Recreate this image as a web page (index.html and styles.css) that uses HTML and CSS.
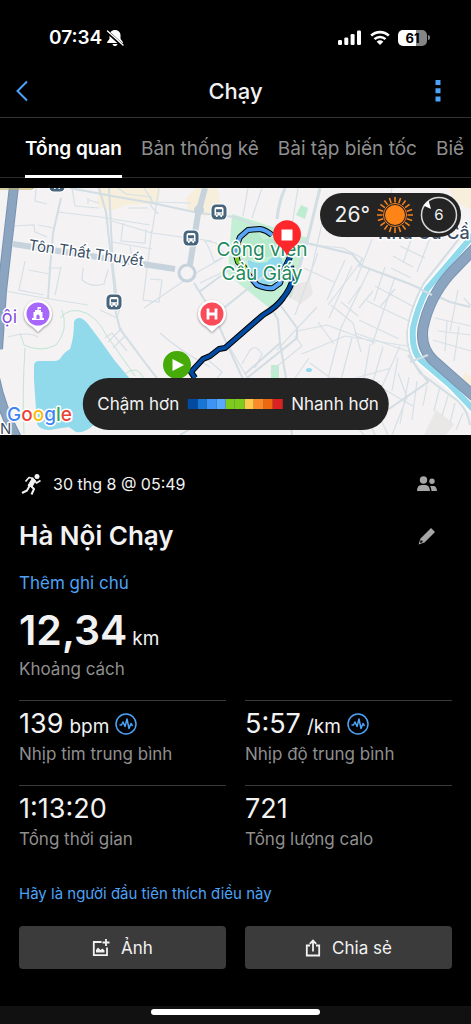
FILE: index.html
```
<!DOCTYPE html>
<html lang="vi">
<head>
    <meta charset="UTF-8">
    <meta name="viewport" content="width=device-width, initial-scale=1">
    <title>Chạy</title>
    <link rel="stylesheet" href="styles.css">
</head>
<body>

<div class="status">
    <div class="status-left">
        <span>07:34</span>
        <svg width="18" height="18" viewBox="0 0 18 18">
            <path d="M9 1c-3 0-5.500 2.200-5.500 5v3.500c0 1.300-2.500 2.500-2.500 4.500h16c0-2-2.500-3.200-2.500-4.500V6c0-2.800-2.500-5-5.500-5zM6.500 15h5c-.4 1.500-1.300 2-2.500 2s-2.100-.5-2.500-2z" fill="#fff"/>
            <path d="M1 2.500l15.500 14" stroke="#000" stroke-width="3.200"/>
            <path d="M1.500 2l15.500 14" stroke="#fff" stroke-width="1.400" stroke-linecap="round"/>
        </svg>
    </div>
    <div class="status-right">
        <svg width="24" height="16" viewBox="0 0 24 16" fill="#fff">
            <rect x="0" y="10" width="4" height="5" rx="1.200"/>
            <rect x="6.300" y="7.500" width="4" height="7.500" rx="1.200"/>
            <rect x="12.600" y="4" width="4" height="11" rx="1.200"/>
            <rect x="19" y="0.500" width="4" height="14.500" rx="1.200"/>
        </svg>
        <svg width="20" height="16" viewBox="0 0 20 16" fill="none" stroke="#fff" stroke-width="2.600">
            <path d="M1.200 5.700a12.500 12.500 0 0 1 17.600 0"/>
            <path d="M4.500 9.200a7.800 7.800 0 0 1 11 0"/>
            <path d="M10 15l-3.300-3.300a4.700 4.700 0 0 1 6.600 0z" fill="#fff" stroke="none"/>
        </svg>
        <div class="battery">61</div>
    </div>
</div>

<header class="header">
    <button class="icon-btn" aria-label="Quay lại">
        <svg width="14" height="22" viewBox="0 0 14 22" fill="none" stroke="#4da3f7" stroke-width="2"><path d="M12 1.500L2.500 11l9.500 9.500"/></svg>
    </button>
    <h1>Chạy</h1>
    <button class="icon-btn" aria-label="Thêm">
        <svg width="6" height="22" viewBox="0 0 6 22" fill="#4da3f7"><path d="M.5 0h5v5h-5zM.5 8.300h5v5h-5zM.5 16.500h5v5h-5z"/></svg>
    </button>
</header>

<nav class="tabs">
    <a class="active" href="#">Tổng quan</a>
    <a href="#">Bản thống kê</a>
    <a href="#">Bài tập biến tốc</a>
    <a class="last" href="#">Biểu</a>
</nav>

<div class="map">
    <svg class="map-canvas" viewBox="0 0 471 247" preserveAspectRatio="xMidYMid slice">
        <defs>
            <g id="bus">
                <rect x="-8.500" y="-8.500" width="17" height="17" rx="5" fill="#fff"/>
                <rect x="-7.500" y="-7.500" width="15" height="15" rx="4.500" fill="#46647c"/>
                <path d="M-4.500-3q0-2 2-2h5q2 0 2 2v6.500h-1.500v1.500h-1.600v-1.500h-2.800v1.500h-1.600v-1.500h-1.500z" fill="#fff"/>
                <path d="M-3-2.800h6v3h-6zM-3 1.500h1.500v1h-1.500zM1.500 1.500h1.500v1h-1.500z" fill="#46647c"/>
            </g>
            <path id="pin" d="M0 18l-5.500-5.200a14 14 0 1 1 11 0z"/>
        </defs>

        <rect width="471" height="247" fill="#f4f2f3"/>

        <!-- blocks -->
        <path d="M98 0h63l-3 15-32 2-16 6-12-5zM186 10l10-10h21l3 14-14 15-18-6z" fill="#f7eedb"/>
        <path d="M448 0h23v22l-14-8zM464 184l7 5v14l-9-9z" fill="#f7eedb"/>
        <path d="M296 96l14-3 3 13-12 10-9-5zM436 222l18 14-8 11h-22z" fill="#e9e8e7"/>
        <path d="M232 26l76 24-16 48-20 24-44-35z" fill="#c3efd5"/>
        <path d="M301 17l7 3-3 11-9-4zM271 177h8v13h-8z" fill="#bdedd1"/>
        <path d="M243 52q10-18 20 0 12-4 18 4l-8 12-26 4z" fill="#b4e8ca"/>

        <!-- water -->
        <path d="M74 134Q75 130 80 130Q84 131 88 136L100 152L115 173L131 192L125 225L95 236Q84 246 76 244L69 239Q60 240 50 242Q40 242 37 236L34 192V178Q34 173 39 173H54Q60 173 62 168Q66 163 70 161Q74 150 74 134Z" fill="#90daec"/>
        <path d="M247 71q8 6 20 3 8-9 15-3l2 10q-7 1-9 13-10 5-17 0-8-8-11-23z" fill="#90daec"/>
        <ellipse cx="309" cy="182" rx="3" ry="2" fill="#90daec"/>

        <!-- park paths -->
        <g fill="none" stroke="#bfe6d2">
            <path d="M25 160q-3 45-1 86M125 186q10-8 16 0l7 12"/>
            <path d="M62 122q7 20-6 35-15 8-32 0l-4-12M60 130q10-12 26-5 12 6 19 20l30 43"/>
        </g>

        <!-- small roads -->
        <g fill="none" stroke="#d6e0e6" stroke-width="1.200">
            <path d="M14 38l20-1 1 7 12 5M58 24l42 5 50 8M72 0l3 18 24 2M112 33l40 12 60 8M123 35l-2 18 24 2 1-14M112 54l40 7M152 42l-9 70 16 2 3-22-12-1M130 58l3 16M38 37l16 3M25 73l-6 29 25 5M48 80h12M28 82l22 4M83 80l-1 12q10 8 22 4l4-14M0 102l38 7 50 8M55 107l6-28"/>
            <path d="M88 10v6M99 15l-10-3M118 0l8 6 25 3v9l7 8M128 20h20M204 52q6 8 10 22l34-18M206 53l10 2 8 10M144 120l50-34 36-20M200 95l50-24M160 145q20 18 50 34M180 190l26-20 16 14-8 10"/>
            <path d="M8 149q20-6 30 0M105 150l7-5 15 18M108 154l14-14M113 160l12-12M100 122l17 8 3-10M144 0l9 14 38 1M159 0l-7 44M36 0l-1 13 12 3"/>
            <path d="M311 57l32 3 19 10-3 9M318 65l-23 62M370 80l-29 60-20 78M363 71l-35 46M338 8l-7 38M353 35l-5 15M372 51l-16 42M385 79l-11 34M395 89l-23 68M375 98l41 22M367 113l42 20M359 132l40 19M355 145l55 19"/>
            <path d="M302 166l43-18 62 10M297 143l30-6 48 18M310 175l19 14 51 5M331 117l22 18 8 29M318 134l16 22M341 114l17 14M352 150l-15 57M370 156l-9 53M383 159l-15 52M398 170l-6 33M320 198h55M303 205l88-25M309 170l-14 20M380 199l33 19M400 158l-20 45M348 116l13-18M359 120l14-17M380 119l15-18"/>
            <path d="M398 185l9 24-15 38M409 189l-9 47M417 193l-5 39M427 197l-4 21M374 216l14 31M362 218l13 29M346 226l18 21M352 240l36-20M435 130l36 8M438 143l33 4M447 133l-2 30M459 138l-5 35M433 152l38 11M458 102l-8 41M464 110l7 8M440 198l-6 25M448 208l-6 20M455 215l-5 20M463 225l-7 17"/>
            <path d="M392 0l-8 39M411 52l-8 23M430 50l-13 34M393 68l20 11M400 58l25 12M391 80l20 10M304 80l30 14M323 31l-14 62M298 0l-8 50M262 0l-10 30M248 0l-5 28M345 72l-18 40M352 78l-23 52"/>
            <path d="M277 162l40-43M270 184l32-26-7-10M242 176l8-14q6-6 12 4l-7 14M230 160l20 34M247 192h42"/>
        </g>

        <!-- larger roads -->
        <g fill="none" stroke="#d2dde4" stroke-width="3">
            <path d="M99 0l7 24 8 73 2 28 4 16 26 35 14 18M109 0l4 80 4 32M61 10l-8 35-3 36-2 30" stroke-width="2"/>
            <path d="M70 0l42 8 40 7 47 10 36 4 47 20 70 17 10 12 48 18 40 18 20 5" stroke-width="2"/>
            <path d="M277 31q2-18 8-31M308 50L320 0M308 50l-18 60"/>
            <path d="M194 95l20 32 27 60 12 22M215 127l55-44M270 117l8 15 2 23-35 31M281 118l16 22v10l-50 40M280 155l6 35 6 57" stroke-width="2"/>
            <path d="M199 104l45-33M180 247l40-24M370 234l58-40-20-27M462 47L424 95q-14 25-17 50 0 22 13 40l38 28q10 10 12 24" stroke-width="2"/>
        </g>
        <g fill="none" stroke="#c6d3dc" stroke-width="6">
            <path d="M13 56l162 25M205 0l-7 26-8 51"/>
        </g>
        <circle cx="187" cy="85" r="8" fill="#f4f2f3" stroke="#c6d3dc" stroke-width="3"/>
        <circle cx="199" cy="22" r="5" fill="#c6d3dc"/>

        <!-- river and expressways -->
        <path d="M475 45L427 101Q417 121 413 140Q411 165 423 174L450 197L475 223" fill="none" stroke="#fff" stroke-width="9"/>
        <path d="M475 45L427 101Q417 121 413 140Q411 165 423 174L450 197L475 223" fill="none" stroke="#90daec" stroke-width="6"/>
        <path d="M475 60L450 86Q429 110 423 140Q420 160 434 173L475 209" fill="none" stroke="#7892b2" stroke-width="11"/>
        <path d="M475 60L450 86Q429 110 423 140Q420 160 434 173L475 209" fill="none" stroke="#8ba5c1" stroke-width="9"/>
        <path d="M410 174l18-7M420 101l12 6" stroke="#d2dde4" stroke-width="2"/>
        <path d="M14-2L2 103l-4 58M-5 190q6 30 22 60" fill="none" stroke="#7892b2" stroke-width="10"/>
        <path d="M14-2L2 103l-4 58M-5 190q6 30 22 60" fill="none" stroke="#8ba5c1" stroke-width="8"/>
        <path d="M0 1h32l4-3" fill="none" stroke="#bba956"/>

        <use href="#bus" x="57" y="-4"/>
        <use href="#bus" x="219" y="24"/>
        <use href="#bus" x="191" y="50"/>
        <use href="#bus" x="114" y="114"/>

        <!-- route -->
        <g fill="none" stroke-linejoin="round">
            <path d="M195 190l-4-6 12-13 7-3 9-7 6-1 38-33q14-8 20-17 8-10 10-20l-2-12" stroke="#000" stroke-width="6"/>
            <path d="M290 69l-5 11-5 15-7 5q-7 1-16-3l-10-12-3-6-6-5-2-7 1-10 3-8 8-7 12-1q6 1 12 6" stroke="#000" stroke-width="6"/>
            <path d="M195 190l-4-6 12-13 7-3 9-7 6-1 38-33q14-8 20-17 8-10 10-20l-2-12" stroke="#034ba1" stroke-width="4"/>
            <path d="M290 69l-5 11-5 15-7 5q-7 1-16-3l-10-12-3-6-6-5-2-7 1-10 3-8 8-7 12-1q6 1 12 6" stroke="#58a5f7" stroke-width="4"/>
            <path d="M247 85l-3-6-6-5-2-7" stroke="#7ecb20" stroke-width="4"/>
            <path d="M290 69l-4 9" stroke="#034ba1" stroke-width="4"/>
        </g>

        <g class="map-text">
            <text class="street" x="28" y="62" transform="rotate(8 28 62)">Tôn Thất Thuyết</text>
            <text class="park" x="262" y="68" text-anchor="middle">Công viên</text>
            <text class="park" x="262" y="92" text-anchor="middle">Cầu Giấy</text>
            <text class="street place" x="378" y="51">Nhà Cũ Cầ</text>
            <text class="museum" x="17" y="135" text-anchor="end">ội</text>
            <text class="street" x="0" y="246">N</text>
            <text class="google" x="7" y="233"><tspan fill="#4285f4">G</tspan><tspan fill="#ea4335">o</tspan><tspan fill="#fbbc05">o</tspan><tspan fill="#4285f4">g</tspan><tspan fill="#34a853">l</tspan><tspan fill="#ea4335">e</tspan></text>
        </g>

        <!-- pins -->
        <g transform="translate(38 126)">
            <use href="#pin" fill="#fff" class="pin-shadow"/>
            <circle r="11.500" fill="#a667fa"/>
            <path d="M-6 4h12v2H-6zM-4.500-2h9v7h-9zM-3-4h6v2h-6zM-.5-7h3.500v1.800h-2.300V-3h-1.200z" fill="#fff"/>
            <path d="M-1.600 5V2.200a1.600 1.600 0 0 1 3.200 0V5z" fill="#a667fa"/>
        </g>
        <g transform="translate(212 126)">
            <use href="#pin" fill="#fff" class="pin-shadow"/>
            <circle r="11.500" fill="#f94b58"/>
            <path d="M-4-5.500v11M4-5.500v11M-4 0h8" stroke="#fff" stroke-width="2.800"/>
        </g>
        <g transform="translate(177 177)">
            <use href="#pin" fill="#46ab08"/>
            <path d="M-4.500-6l11.500 6-11.500 6z" fill="#fff"/>
        </g>
        <g transform="translate(287 48)">
            <path d="M0 20q-3-7-9-11a14 14 0 1 1 18 0q-6 4-9 11z" fill="#fe282c"/>
            <path d="M-5.500-6.500h11v11h-11z" fill="#fff"/>
        </g>
    </svg>

    <div class="weather">
        <span>26°</span>
        <svg width="38" height="38" viewBox="-19 -19 38 38">
            <g stroke="#f58220" stroke-width="1.600">
                <path id="ray" d="M0-12.500V-18M0 12.500V18"/>
                <use href="#ray" transform="rotate(18)"/>
                <use href="#ray" transform="rotate(36)"/>
                <use href="#ray" transform="rotate(54)"/>
                <use href="#ray" transform="rotate(72)"/>
                <use href="#ray" transform="rotate(90)"/>
                <use href="#ray" transform="rotate(108)"/>
                <use href="#ray" transform="rotate(126)"/>
                <use href="#ray" transform="rotate(144)"/>
                <use href="#ray" transform="rotate(162)"/>
            </g>
            <circle r="11.500" fill="none" stroke="#f58220" stroke-width="1"/>
            <circle r="10" fill="#ff8418"/>
        </svg>
        <div class="wind">
            <svg width="38" height="38" viewBox="-19 -19 38 38">
                <circle r="17.500" fill="none" stroke="#d8d8d8" stroke-width="1.500"/>
                <path d="M-8-6l-7.500-3.500 5-5z" fill="#fff"/>
            </svg>
            <span>6</span>
        </div>
    </div>

    <div class="legend">
        <span>Chậm hơn</span>
        <div class="scale">
            <i class="c1"></i><i class="c2"></i><i class="c3"></i><i class="c4"></i><i class="c5"></i>
            <i class="c5"></i><i class="c6"></i><i class="c7"></i><i class="c8"></i><i class="c9"></i>
        </div>
        <span>Nhanh hơn</span>
    </div>
</div>

<main class="content">
    <div class="row meta">
        <svg width="24" height="24" viewBox="0 0 24 24" fill="none" stroke="#f2f2f2" stroke-linejoin="round">
            <circle cx="18" cy="4.500" r="2.500" fill="#f2f2f2" stroke="none"/>
            <path d="M13.500 6L9 13.500l4 1.500 3.500-6.500z" fill="#f2f2f2" stroke="#f2f2f2"/>
            <path d="M14.500 6.500L10 5.500 6.500 9.500M15.500 8.500l2 2.500 4-2.500" stroke-width="1.600"/>
            <path d="M10.500 14L8 18.500l-5 2.500M11.500 13.500l3.500 3.500-2.500 5.500" stroke-width="2"/>
        </svg>
        <span class="date">30 thg 8 @ 05:49</span>
        <button class="icon-btn" aria-label="Quyền riêng tư">
            <svg width="20" height="16" viewBox="0 0 20 16" fill="#a6a6a6">
                <circle cx="6.500" cy="4" r="3.700"/>
                <circle cx="15" cy="5.300" r="2.700"/>
                <path d="M0 15q0-6 4.500-6h4q4 0 4.500 6zM13 10h3.500q3 0 3.500 5h-5.500q0-3-1.500-5z"/>
            </svg>
        </button>
    </div>

    <div class="row title">
        <h2>Hà Nội Chạy</h2>
        <button class="icon-btn" aria-label="Sửa">
            <svg width="18" height="18" viewBox="0 0 18 18" fill="#a6a6a6">
                <path d="M13 1l4 4L6.500 15.500l-6 2L2.500 11.500zM2.500 13.500L2 16l2.500-.8v-1.700z" fill-rule="evenodd"/>
            </svg>
        </button>
    </div>

    <a class="note" href="#">Thêm ghi chú</a>

    <div class="distance">
        <div><b>12,34</b> <span class="unit">km</span></div>
        <p>Khoảng cách</p>
    </div>

    <div class="stats">
        <div class="stat">
            <div class="value">139 <span class="unit">bpm</span>
                <svg width="22" height="22" viewBox="0 0 22 22" fill="none" stroke="#4da3f7" stroke-width="1.500"><circle cx="11" cy="11" r="10"/><path d="M4.500 12h2L8 9l2 4.500L12 6l2 9.500 2-5 1.500 2.500" stroke-linejoin="round"/></svg>
            </div>
            <p>Nhịp tim trung bình</p>
        </div>
        <div class="stat">
            <div class="value">5:57 <span class="unit">/km</span>
                <svg width="22" height="22" viewBox="0 0 22 22" fill="none" stroke="#4da3f7" stroke-width="1.500"><circle cx="11" cy="11" r="10"/><path d="M4.500 12h2L8 9l2 4.500L12 6l2 9.500 2-5 1.500 2.500" stroke-linejoin="round"/></svg>
            </div>
            <p>Nhịp độ trung bình</p>
        </div>
        <div class="stat">
            <div class="value">1:13:20</div>
            <p>Tổng thời gian</p>
        </div>
        <div class="stat">
            <div class="value">721</div>
            <p>Tổng lượng calo</p>
        </div>
    </div>

    <a class="like" href="#">Hãy là người đầu tiên thích điều này</a>

    <div class="actions">
        <button>
            <svg width="18" height="18" viewBox="0 0 18 18" fill="none" stroke="#f2f2f2" stroke-width="1.800">
                <path d="M9.500 3H1.800v13.200H15V8.500M14 0v7M10.500 3.500h7"/>
                <path d="M4 13.500V11l2-2.500L8.500 11l2-1.500 2 2v2z" fill="#f2f2f2" stroke="none"/>
            </svg>
            Ảnh
        </button>
        <button>
            <svg width="16" height="18" viewBox="0 0 16 18" fill="none" stroke="#f2f2f2" stroke-width="1.800">
                <path d="M5 6.500H1.800v10h12.400v-10H11M8 12.500V2M4.800 4.800L8 1.600l3.200 3.200"/>
            </svg>
            Chia sẻ
        </button>
    </div>
</main>

<div class="home"><span></span></div>

</body>
</html>
```
FILE: styles.css
```
* { margin: 0; padding: 0; box-sizing: border-box; }
body { min-height: 100vh; display: flex; flex-direction: column; overflow-x: hidden; background: #000; color: #f2f2f2; font-family: Inter, "Noto Sans", sans-serif; font-size: 17px; line-height: 24px; }
a { color: #4da3f7; text-decoration: none; }
button { border: 0; background: none; color: inherit; font: inherit; cursor: pointer; }
svg { display: block; flex: none; }
.icon-btn { display: flex; align-items: center; justify-content: center; min-width: 20px; height: 24px; }


/**** status bar ****/
.status { display: flex; justify-content: space-between; align-items: center; height: 64px; padding: 12px 44px 0 49px; color: #fff; }
.status-left { display: flex; align-items: center; gap: 4px; font-size: 19px; font-weight: 600; }
.status-right { display: flex; align-items: center; gap: 8px; }
.battery { position: relative; width: 29px; height: 16px; border-radius: 5px; background: linear-gradient(90deg, #fff 61%, #858585 61%); color: #000; font-size: 13px; font-weight: 700; line-height: 16px; text-align: center; }
.battery::after { content: ''; position: absolute; right: -3px; top: 5px; width: 2px; height: 5px; border-radius: 0 2px 2px 0; background: #858585; }


/**** header ****/
.header { display: grid; grid-template-columns: 1fr auto 1fr; align-items: center; height: 54px; padding: 0 23px 0 12px; border-bottom: 1px solid #333; }
.header h1 { padding-left: 11px; font-size: 22px; font-weight: 500; line-height: 28px; }
.header .icon-btn { justify-self: start; }
.header .icon-btn:last-child { justify-self: end; }


/**** tabs ****/
.tabs { display: flex; gap: 19px; height: 60px; margin-bottom: 10px; padding: 0 6px 0 25px; border-bottom: 1px solid #2b2b2b; }
.tabs a { flex: none; height: 60px; color: #8f8f8f; font-size: 19px; line-height: 61px; }
.tabs a.active { border-bottom: 3px solid #fff; color: #fff; font-weight: 600; }
.tabs a.last { flex: 1; min-width: 0; overflow: hidden; white-space: nowrap; }


/**** map ****/
.map { position: relative; height: 247px; overflow: hidden; }
.map-canvas { width: 100%; height: 100%; }
.map-text text { paint-order: stroke; stroke: #fff; stroke-width: 3px; stroke-linejoin: round; }
.street { font-size: 15px; fill: #3c5068; }
.place { font-size: 18px; font-weight: 500; }
.park { font-size: 19px; fill: #1f8a60; }
.museum { font-size: 18px; fill: #8650d8; }
.google { font-size: 19px; font-weight: 500; }
.pin-shadow { filter: drop-shadow(0 1px 1px rgba(0,0,0,.4)); }
.weather { position: absolute; top: 5px; right: 10px; display: flex; align-items: center; gap: 6px; height: 44px; padding: 0 3px 0 15px; border-radius: 22px; background: #242424; font-size: 21px; }
.wind { position: relative; }
.wind span { position: absolute; left: 0; right: 0; top: 7px; font-size: 15px; text-align: center; }
.legend { position: absolute; left: 50%; bottom: 5px; display: flex; align-items: center; gap: 9px; height: 52px; padding: 0 10px 0 15px; border-radius: 26px; background: #242424; white-space: nowrap; transform: translateX(-50%); }
.scale { display: flex; width: 94px; height: 10px; }
.scale i { flex: 1; }
.c1 { background: #034ba1; }
.c2 { background: #1976d2; }
.c3 { background: #3e94f4; }
.c4 { background: #58a8ff; }
.c5 { background: #7ecb20; }
.c6 { background: #fdc94d; }
.c7 { background: #fa8b28; }
.c8 { background: #ed690f; }
.c9 { background: #d92222; }


/**** content ****/
.content { padding: 37px 19px 0; }
.row { display: flex; align-items: center; }
.row .icon-btn { margin-left: auto; margin-right: 15px; }
.meta { gap: 10px; font-size: 16px; }
.title { margin-top: 20px; }
.title h2 { font-size: 26px; font-weight: 600; line-height: 40px; }
.note { display: block; margin-top: 15px; font-size: 17px; }
.content p { color: #8f8f8f; font-size: 17px; line-height: 24px; }
.unit { font-size: 19px; }
.distance { margin-top: 8px; margin-bottom: 19px; }
.distance div { display: flex; align-items: baseline; gap: 5px; height: 54px; line-height: 54px; }
.distance b { font-size: 41px; font-weight: 600; }


/**** stats ****/
.stats { display: grid; grid-template-columns: 1fr 1fr; column-gap: 19px; }
.stat { height: 85px; padding-top: 4px; border-top: 1px solid #3a3a3a; }
.value { display: flex; align-items: baseline; gap: 6px; height: 37px; font-size: 27px; line-height: 37px; }
.value svg { align-self: center; }


/**** actions ****/
.like { display: block; margin-top: 12px; font-size: 15px; }
.actions { display: grid; grid-template-columns: 1fr 1fr; gap: 19px; margin-top: 20px; }
.actions button { display: flex; align-items: center; justify-content: center; gap: 11px; height: 43px; border-radius: 4px; background: #3b3b3b; }
.home { height: 18px; margin-top: auto; padding-top: 3px; background: #111; }
.home span { display: block; width: 36%; height: 6px; margin: 0 auto; border-radius: 3px; background: #fff; }
```
